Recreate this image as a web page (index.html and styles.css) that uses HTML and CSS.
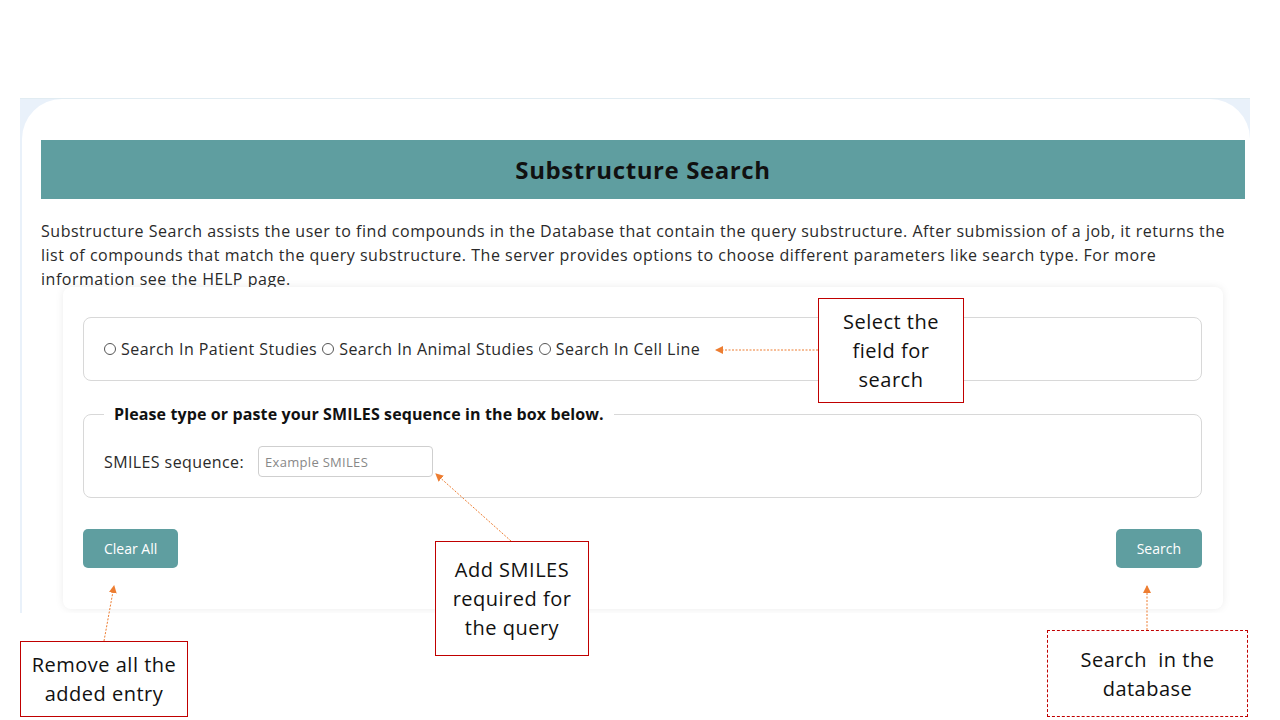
FILE: index.html
```html
<!DOCTYPE html>
<html lang="en">
<head>
<meta charset="utf-8">
<title>Substructure Search</title>
<link rel="stylesheet" href="styles.css">
</head>
<body>
<div class="slide">
  <div class="shot">
    <div class="panel">
      <div class="title-bar"><h1>Substructure Search</h1></div>
      <p class="intro">Substructure Search assists the user to find compounds in the Database that contain the query substructure. After submission of a job, it returns the list of compounds that match the query substructure. The server provides options to choose different parameters like search type. For more information see the HELP page.</p>
      <div class="card">
        <fieldset class="field-type">
          <label class="opt"><input type="radio" name="t"><span>Search In Patient Studies</span></label>
          <label class="opt"><input type="radio" name="t"><span>Search In Animal Studies</span></label>
          <label class="opt"><input type="radio" name="t"><span>Search In Cell Line</span></label>
        </fieldset>
        <fieldset class="field-smiles">
          <legend>Please type or paste your SMILES sequence in the box below.</legend>
          <div class="row">
            <label class="lbl" for="smi">SMILES sequence:</label>
            <input id="smi" class="inp" type="text" placeholder="Example SMILES">
          </div>
        </fieldset>
        <div class="actions">
          <button class="btn">Clear All</button>
          <button class="btn">Search</button>
        </div>
      </div>
    </div>
  </div>

  <svg class="arrows" width="1280" height="720" viewBox="0 0 1280 720">
    <defs>
      <marker id="ah" markerWidth="8" markerHeight="8" refX="7" refY="4" orient="auto" markerUnits="userSpaceOnUse">
        <path d="M0,0 L8,4 L0,8 Z" fill="#ed7d31"/>
      </marker>
    </defs>
    <g stroke="#ed7d31" stroke-width="1" stroke-dasharray="2 1.5" fill="none">
      <line x1="818" y1="350" x2="716" y2="350" marker-end="url(#ah)"/>
      <line x1="511" y1="541" x2="436" y2="474" marker-end="url(#ah)"/>
      <line x1="104" y1="641" x2="114" y2="586" marker-end="url(#ah)"/>
      <line x1="1147" y1="630" x2="1147" y2="586" marker-end="url(#ah)"/>
    </g>
  </svg>

  <div class="note note-field">Select the<br>field for<br>search</div>
  <div class="note note-smiles">Add SMILES<br>required for<br>the query</div>
  <div class="note note-clear">Remove all the<br>added entry</div>
  <div class="note note-search dashed">Search&nbsp; in the<br>database</div>
</div>
</body>
</html>
```

FILE: styles.css
```css
* { box-sizing: border-box; }
html, body { margin: 0; padding: 0; background: #ffffff; }
body { font-family: "Open Sans", "Noto Sans", sans-serif; color: #222; }

.slide {
  position: relative;
  width: 1280px;
  height: 720px;
  overflow: hidden;
  background: #ffffff;
  padding: 98px 0 0 20px;
}

.shot {
  width: 1230px;
  height: 515px;
  overflow: hidden;
  background: #e9f1fa;
  border-top: 1px solid #e1ecf2;
}

.panel {
  margin: 0 0 0 2px;
  height: 520px;
  background: #ffffff;
  border-radius: 40px 40px 0 0;
  padding: 41px 5px 0 19px;
}

.title-bar {
  height: 59px;
  background: #5f9ea0;
  display: flex;
  align-items: center;
  justify-content: center;
}
.title-bar h1 {
  margin: 0;
  font-size: 24px;
  font-weight: 700;
  color: #111;
  letter-spacing: 0.6px;
}

.intro {
  margin: 20px 16px 0 0;
  font-size: 16px;
  line-height: 24px;
  color: #2a2a2a;
  letter-spacing: 0.52px;
}

.card {
  position: relative;
  margin: -4px 22px 0;
  background: #ffffff;
  border-radius: 8px;
  box-shadow: 0 0 8px rgba(0, 0, 0, 0.08);
  padding: 30px 21px 41px 20px;
}

.field-type {
  margin: 0;
  height: 64px;
  border: 1px solid #d8d8d8;
  border-radius: 8px;
  padding: 0 20px;
  display: flex;
  align-items: center;
  gap: 5px;
}

.opt {
  display: flex;
  align-items: center;
  gap: 5px;
  font-size: 16px;
  letter-spacing: 0.45px;
  color: #2a2a2a;
}
.opt input {
  appearance: none;
  -webkit-appearance: none;
  margin: 0;
  width: 12px;
  height: 12px;
  border: 1px solid #555;
  border-radius: 50%;
  background: #fff;
}

.field-smiles {
  margin: 22px 0 0;
  border: 1px solid #d8d8d8;
  border-radius: 8px;
  padding: 21px 20px 20px;
}
.field-smiles legend {
  padding: 0 10px;
  font-size: 16px;
  line-height: 22px;
  font-weight: 700;
  letter-spacing: 0.12px;
  color: #111;
}

.row {
  display: flex;
  align-items: center;
  gap: 14px;
}
.lbl {
  font-size: 16px;
  letter-spacing: 0.4px;
  color: #2a2a2a;
}
.inp {
  width: 175px;
  height: 31px;
  border: 1px solid #cfcfcf;
  border-radius: 4px;
  padding: 0 6px;
  font-family: "Open Sans", sans-serif;
  font-size: 13px;
  letter-spacing: 0.3px;
  color: #333;
  background: #fff;
}
.inp::placeholder { color: #888; }

.actions {
  margin-top: 31px;
  display: flex;
  justify-content: space-between;
}
.btn {
  height: 39px;
  padding: 0 21px;
  border: 0;
  border-radius: 5px;
  background: #5f9ea0;
  color: #fff;
  font-family: "Open Sans", sans-serif;
  font-size: 14px;
}

.arrows {
  position: absolute;
  left: 0;
  top: 0;
}

.note {
  position: absolute;
  display: flex;
  align-items: center;
  justify-content: center;
  text-align: center;
  border: 1px solid #c00000;
  background: #fff;
  font-family: "Open Sans", "Noto Sans", sans-serif;
  font-size: 20px;
  line-height: 29px;
  letter-spacing: 0.5px;
  color: #111;
}
.note.dashed { border-style: dashed; }
.note-field { left: 818px; top: 298px; width: 146px; height: 105px; }
.note-smiles { left: 435px; top: 541px; width: 154px; height: 115px; }
.note-clear { left: 20px; top: 641px; width: 168px; height: 76px; }
.note-search { left: 1047px; top: 630px; width: 201px; height: 87px; }
```
